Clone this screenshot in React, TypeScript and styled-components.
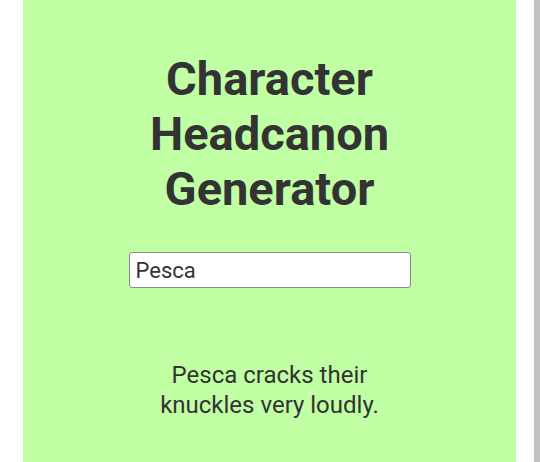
import React from "react";
import styled, { createGlobalStyle } from "styled-components";

const Global = createGlobalStyle`
  html, body {
    margin: 0;
    padding: 0;
    background: #fff;
    overflow: hidden;
  }
`;

function App() {
  const [name, setName] = React.useState("Pesca");

  return (
    <>
      <Global />
      <Page>
        <Panel>
          <Title>Character Headcanon Generator</Title>
          <NameInput value={name} onChange={(e) => setName(e.target.value)} />
          <Result>{name} cracks their knuckles very loudly.</Result>
        </Panel>
        <Rail />
      </Page>
    </>
  );
}

const Page = styled.div`
  height: 462px;
  display: flex;
  padding-left: 23px;
  box-sizing: border-box;
`;

const Panel = styled.main`
  width: 493px;
  height: 100%;

  display: flex;
  flex-direction: column;
  align-items: center;
  padding-top: 51px;
  box-sizing: border-box;

  background-color: #c0ffa3;
  font-family: Roboto, "Liberation Sans", sans-serif;
  color: #333;
`;

const Title = styled.h1`
  width: 300px;
  margin: 0;

  font-size: 47px;
  line-height: 55px;
  font-weight: 700;
  text-align: center;
`;

const NameInput = styled.input`
  width: 282px;
  height: 36px;
  margin-top: 36px;
  padding: 0 6px;
  box-sizing: border-box;

  font-family: Roboto, "Liberation Sans", sans-serif;
  font-size: 22px;
  color: #333;

  background: #fff;
  border: 1px solid #888;
  border-radius: 3px;
  outline: none;
`;

const Result = styled.p`
  width: 250px;
  margin: 72px 0 0;

  font-size: 24px;
  line-height: 30px;
  text-align: center;
`;

const Rail = styled.div`
  width: 6px;
  height: 100%;
  margin-left: auto;
  background-color: #c1c1c1;
`;

export default App;
